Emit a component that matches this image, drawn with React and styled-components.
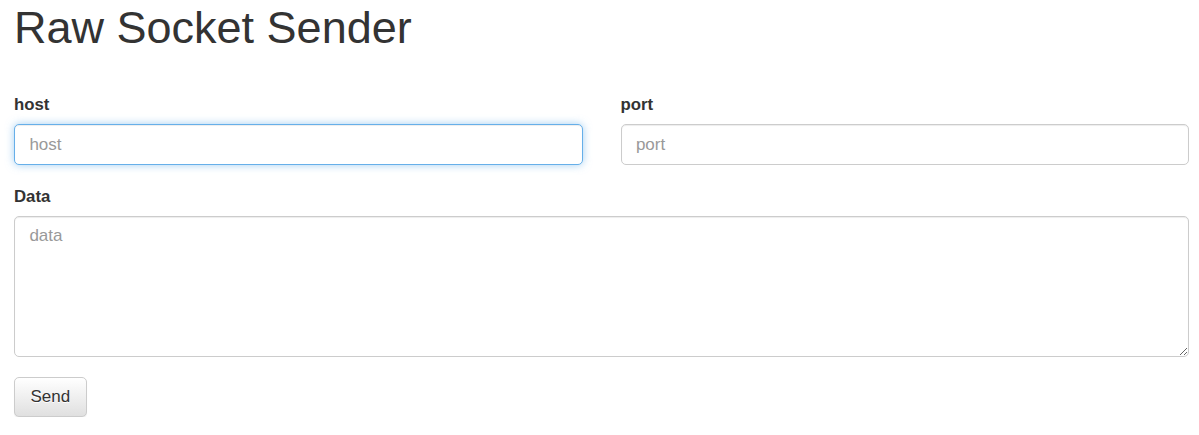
import React from "react";
import styled, { createGlobalStyle, css } from "styled-components";

const Global = createGlobalStyle`
  html, body { margin: 0; padding: 0; background: #fff; }
  body {
    font-family: "Liberation Sans", Arial, sans-serif;
    font-size: 16.8px;
    line-height: 1.42857;
    color: #333;
  }
  * { box-sizing: border-box; }
`;

const Page = styled.div`
  padding: 4px 10px 0 14px;
`;

const Title = styled.h1`
  margin: 0 0 41px 0;
  font-size: 45px;
  line-height: 48.4px;
  font-weight: 500;
  color: #333;
`;

const Form = styled.form`
  display: flex;
  flex-direction: column;
`;

const Row = styled.div`
  display: grid;
  grid-template-columns: 1fr 1fr;
  column-gap: 38px;
`;

const Group = styled.div`
  display: flex;
  flex-direction: column;
  margin-bottom: 20px;
`;

const Label = styled.label`
  display: block;
  font-weight: 700;
  font-size: 16.8px;
  line-height: 24px;
  margin-bottom: 7px;
  color: #333;
`;

const fieldBase = css`
  display: block;
  width: 100%;
  padding: 7px 14.4px;
  font-family: "Liberation Sans", Arial, sans-serif;
  font-size: 17px;
  line-height: 24px;
  color: #555;
  background: #fff;
  border: 1px solid #ccc;
  border-radius: 5px;
  box-shadow: inset 0 1px 1px rgba(0, 0, 0, 0.075);
  outline: none;
  &::placeholder { color: #999; opacity: 1; }
  ${(p) =>
    p.$focused &&
    css`
      border-color: #66afe9;
      box-shadow: inset 0 1px 1px rgba(0, 0, 0, 0.075),
        0 0 8px rgba(102, 175, 233, 0.6);
    `}
  &:focus {
    border-color: #66afe9;
    box-shadow: inset 0 1px 1px rgba(0, 0, 0, 0.075),
      0 0 8px rgba(102, 175, 233, 0.6);
  }
`;

const Input = styled.input`
  ${fieldBase}
  height: 41px;
`;

const TextArea = styled.textarea`
  ${fieldBase}
  height: 141px;
  resize: vertical;
  margin: 0;
`;

const Button = styled.button`
  align-self: flex-start;
  display: inline-block;
  padding: 7px 15.5px;
  height: 40px;
  font-family: "Liberation Sans", Arial, sans-serif;
  font-size: 17px;
  line-height: 24px;
  color: #333;
  text-shadow: 0 1px 0 #fff;
  background-color: #fff;
  background-image: linear-gradient(to bottom, #fff 0, #e0e0e0 100%);
  border: 1px solid #ccc;
  border-radius: 5px;
  box-shadow: inset 0 1px 0 rgba(255, 255, 255, 0.15),
    0 1px 1px rgba(0, 0, 0, 0.075);
  cursor: pointer;
`;

export default function App() {
  return (
    <>
      <Global />
      <Page>
        <Title>Raw Socket Sender</Title>
        <Form onSubmit={(e) => e.preventDefault()}>
          <Row>
            <Group>
              <Label htmlFor="host">host</Label>
              <Input id="host" placeholder="host" $focused autoFocus />
            </Group>
            <Group>
              <Label htmlFor="port">port</Label>
              <Input id="port" placeholder="port" />
            </Group>
          </Row>
          <Group>
            <Label htmlFor="data">Data</Label>
            <TextArea id="data" placeholder="data" />
          </Group>
          <Button type="submit">Send</Button>
        </Form>
      </Page>
    </>
  );
}
